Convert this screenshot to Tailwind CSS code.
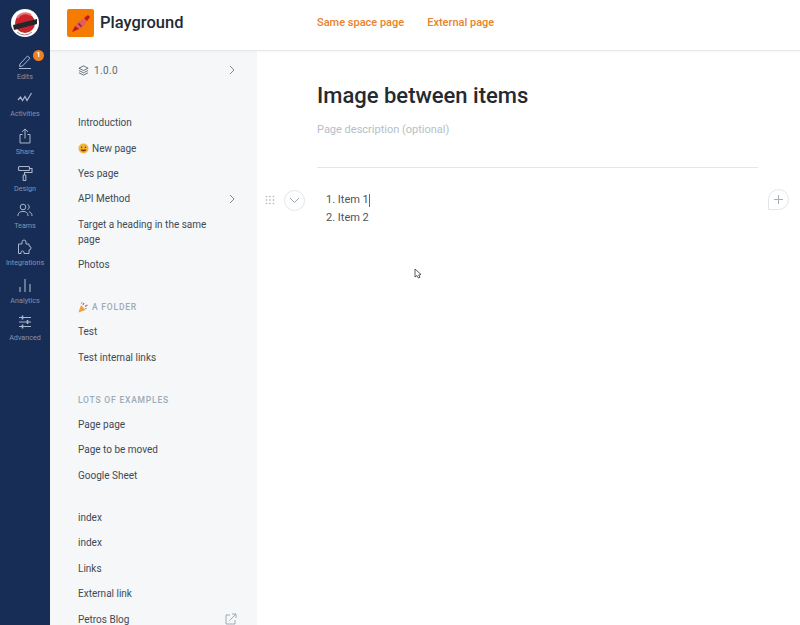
<!DOCTYPE html>
<html lang="en">
<head>
  <meta charset="UTF-8" />
  <title>Playground</title>
  <script src="https://cdn.jsdelivr.net/npm/@tailwindcss/browser@4"></script>
</head>
<body class="bg-white font-['Roboto',sans-serif] text-[#242a31] overflow-hidden">
  <div class="flex w-[800px] h-[625px] overflow-hidden">

    <!-- icon rail -->
    <aside class="w-[50px] shrink-0 bg-[#182d55] flex flex-col items-center text-[#8393b0] text-[7.200px] leading-[10px]">
      <div class="mt-[9px] mb-[1px] w-[28px] h-[28px] rounded-full bg-white flex items-center justify-center">
        <svg width="26" height="26" viewBox="0 0 26 26">
          <circle cx="13" cy="13" r="10" fill="#c9242c"/>
          <path d="M5 8a10 10 0 0 1 14-3" fill="none" stroke="#e8737a" stroke-width="2"/>
          <path d="M1 15 L25 9 L25 14 L2 20 Z" fill="#26262c"/>
          <path d="M5 22a11 11 0 0 0 15 0" fill="none" stroke="#8b8b8b" stroke-width="1"/>
        </svg>
      </div>
      <div class="mt-[9px] relative h-[37.300px] w-full flex flex-col items-center pt-[6px]">
        <div class="h-[16px] flex items-center"><svg width="16" height="16" viewBox="0 0 16 16" fill="none" stroke="#a9b6cc" stroke-width="1"><path d="M3 11 L10.500 3 L13 5.200 L5.500 13 L2.500 13.500 Z"/><path d="M2 15.500 H14"/></svg></div>
        <span class="mt-[3px]">Edits</span>
        <span class="absolute left-[33px] top-[3px] w-[11px] h-[11px] rounded-full bg-[#ed8022] text-white text-[7px] leading-[11px] text-center font-bold">1</span>
      </div>
      <div class="h-[37.300px] w-full flex flex-col items-center pt-[6px]">
        <div class="h-[16px] flex items-center"><svg width="16" height="14" viewBox="0 0 16 14" fill="none" stroke="#a9b6cc" stroke-width="1.200"><path d="M1 9 L3.500 6 L5.500 9.500 L8 5.500 L10 9.500 L14.500 2"/></svg></div>
        <span class="mt-[3px]">Activities</span>
      </div>
      <div class="h-[37.300px] w-full flex flex-col items-center pt-[6px]">
        <div class="h-[16px] flex items-center"><svg width="14" height="16" viewBox="0 0 14 16" fill="none" stroke="#a9b6cc" stroke-width="1"><path d="M7 10.500 V1 M4 3.800 L7 1 L10 3.800"/><path d="M4.500 6.500 H2 V15 H12 V6.500 H9.500"/></svg></div>
        <span class="mt-[3px]">Share</span>
      </div>
      <div class="h-[37.300px] w-full flex flex-col items-center pt-[6px]">
        <div class="h-[16px] flex items-center"><svg width="16" height="16" viewBox="0 0 16 16" fill="none" stroke="#a9b6cc" stroke-width="1.100"><rect x="1.500" y="1.500" width="11" height="4" rx="1"/><path d="M12.500 3.500 H15 V7.500 H7.500 V10"/><rect x="6.200" y="10" width="2.600" height="5.500" rx=".6"/></svg></div>
        <span class="mt-[3px]">Design</span>
      </div>
      <div class="h-[37.300px] w-full flex flex-col items-center pt-[6px]">
        <div class="h-[16px] flex items-center"><svg width="16" height="14" viewBox="0 0 16 14" fill="none" stroke="#a9b6cc" stroke-width="1"><circle cx="6" cy="4" r="2.800"/><path d="M1 13 C1 9.500 3 8.500 6 8.500 C9 8.500 11 9.500 11 13"/><path d="M10.500 1.400 A2.800 2.800 0 0 1 10.500 6.600 M12 8.800 C14 9.400 15 10.500 15 13"/></svg></div>
        <span class="mt-[3px]">Teams</span>
      </div>
      <div class="h-[37.300px] w-full flex flex-col items-center pt-[6px]">
        <div class="h-[16px] flex items-center"><svg width="16" height="16" viewBox="0 0 16 16" fill="none" stroke="#a9b6cc" stroke-width="1"><path d="M1.500 5 H5 V3 A2 2 0 0 1 9 3 V5 H12 V7 A2 2 0 0 1 12 11 V14.500 H7 V13 A1.600 1.600 0 0 0 4 13 V14.500 H1.500 Z"/></svg></div>
        <span class="mt-[3px]">Integrations</span>
      </div>
      <div class="h-[37.300px] w-full flex flex-col items-center pt-[6px]">
        <div class="h-[16px] flex items-center"><svg width="14" height="16" viewBox="0 0 14 16" fill="none" stroke="#a9b6cc" stroke-width="1.100"><path d="M2 15 V10 M7 15 V2 M12 15 V7"/></svg></div>
        <span class="mt-[3px]">Analytics</span>
      </div>
      <div class="h-[37.300px] w-full flex flex-col items-center pt-[6px]">
        <div class="h-[16px] flex items-center"><svg width="14" height="16" viewBox="0 0 14 16" fill="none" stroke="#a9b6cc" stroke-width="1"><path d="M1 3.500 H13 M1 8 H13 M1 12.500 H13"/><path d="M4.500 1.500 V5.500 M9.500 6 V10 M4.500 10.500 V14.500" stroke-width="1.600"/></svg></div>
        <span class="mt-[3px]">Advanced</span>
      </div>
    </aside>

    <div class="flex-1 flex flex-col min-w-0">
      <!-- top bar -->
      <header class="h-[51px] shrink-0 bg-white border-b border-[#e6e9ec] shadow-[0_1px_2px_rgba(0,0,0,0.04)] flex items-center relative z-10">
        <div class="w-[27px] h-[28px] ml-[17px] mb-[5px] rounded-[2px] bg-[#f57c00] flex items-center justify-center">
          <svg width="22" height="22" viewBox="0 0 22 22">
            <path d="M3 19 L7 11 L15 6 L17.500 8.500 L12 16 Z" fill="#e35d5d"/>
            <path d="M2 20 L5 14 L9 17 Z" fill="#c4161c"/>
            <path d="M14 6 L18 3 L20 5 L17 9 Z" fill="#c4161c"/>
            <path d="M8.500 11.500 L11.500 14.500" stroke="#7a2a2a" stroke-width="1.500"/>
          </svg>
        </div>
        <div class="w-[217px] ml-[6px] mb-[5px] text-[16.500px] font-medium text-[#242a31] leading-[24px]">Playground</div>
        <nav class="flex gap-[23px] mb-[3px] text-[11px] font-medium text-[#e8822b]">
          <span>Same space page</span>
          <span>External page</span>
        </nav>
      </header>

      <div class="flex-1 flex min-h-0">
        <!-- page list -->
        <nav class="w-[207px] shrink-0 bg-[#f5f7f9] text-[10px] font-normal text-[#3f4a55] overflow-hidden pl-[28px] pr-[20px]">
          <div class="h-[36px] flex items-center justify-between text-[#5c6975] pt-[2px] pr-[1px]">
            <div class="flex items-center gap-[5px] tracking-[0.4px]">
              <svg width="11" height="11" viewBox="0 0 12 12" fill="none" stroke="#5c6975" stroke-width="1"><path d="M6 1 L11 3.500 L6 6 L1 3.500 Z"/><path d="M1 6 L6 8.500 L11 6 M1 8.500 L6 11 L11 8.500"/></svg>
              <span>1.0.0</span>
            </div>
            <svg width="8" height="10" viewBox="0 0 8 10" fill="none" stroke="#7d8a96" stroke-width="1"><path d="M2 1 L6 5 L2 9"/></svg>
          </div>
          <ul class="mt-[23px] leading-[15px]">
            <li class="h-[25.400px] flex items-center">Introduction</li>
            <li class="h-[25.400px] flex items-center gap-[3px]">
              <svg width="11" height="11" viewBox="0 0 11 11"><circle cx="5.500" cy="5.500" r="5" fill="#f5b335"/><circle cx="3.600" cy="4.300" r=".7" fill="#5c3a10"/><circle cx="7.400" cy="4.300" r=".7" fill="#5c3a10"/><path d="M2.500 6.500 H8.500 C8 9 3 9 2.500 6.500 Z" fill="#7a3b12"/></svg>
              <span>New page</span>
            </li>
            <li class="h-[25.400px] flex items-center">Yes page</li>
            <li class="h-[25.400px] flex items-center justify-between pr-[1px]">
              <span>API Method</span>
              <svg width="8" height="10" viewBox="0 0 8 10" fill="none" stroke="#7d8a96" stroke-width="1"><path d="M2 1 L6 5 L2 9"/></svg>
            </li>
            <li class="pt-[5px] pb-[5px] pr-[16px]">Target a heading in the same page</li>
            <li class="h-[25.400px] flex items-center">Photos</li>
          </ul>
          <div class="mt-[22px] h-[17px] flex items-center gap-[4px] text-[8.500px] font-medium tracking-[0.800px] text-[#9daab6]">
            <svg width="10" height="11" viewBox="0 0 10 11"><path d="M0.500 10.500 L3 3 L7.500 8 Z" fill="#f0a040"/><path d="M5 3 L6 1 M7 4.500 L9.500 3 M3.500 1.500 L4 0.500" stroke="#d8574a" stroke-width="1.200"/><circle cx="8" cy="6.500" r=".8" fill="#6aa5d8"/></svg>
            <span>A FOLDER</span>
          </div>
          <ul class="mt-[3px]">
            <li class="h-[25.400px] flex items-center">Test</li>
            <li class="h-[25.400px] flex items-center">Test internal links</li>
          </ul>
          <div class="mt-[22px] h-[17px] flex items-center text-[8.500px] font-medium tracking-[0.800px] text-[#9daab6]">LOTS OF EXAMPLES</div>
          <ul class="mt-[3px]">
            <li class="h-[25.400px] flex items-center">Page page</li>
            <li class="h-[25.400px] flex items-center">Page to be moved</li>
            <li class="h-[25.400px] flex items-center">Google Sheet</li>
          </ul>
          <ul class="mt-[17px]">
            <li class="h-[25.400px] flex items-center">index</li>
            <li class="h-[25.400px] flex items-center">index</li>
            <li class="h-[25.400px] flex items-center">Links</li>
            <li class="h-[25.400px] flex items-center">External link</li>
            <li class="h-[25.400px] flex items-center justify-between">
              <span>Petros Blog</span>
              <svg width="12" height="12" viewBox="0 0 12 12" fill="none" stroke="#9daab6" stroke-width="1"><path d="M5 2 H1 V11 H10 V7"/><path d="M4.500 7.500 L11 1 M7 1 H11 V5"/></svg>
            </li>
          </ul>
        </nav>

        <!-- editor -->
        <main class="flex-1 min-w-0 bg-white pl-[60px] pr-[42px] pt-[29px] relative">
          <h1 class="text-[22px] leading-[32px] font-medium text-[#242a31]">Image between items</h1>
          <p class="mt-[10px] text-[11px] leading-[16px] text-[#b5bec7]">Page description (optional)</p>
          <div class="mt-[29px] border-t border-[#e3e6e9]"></div>

          <div class="mt-[22px] flex relative">
            <div class="absolute left-[-52px] top-[5px]">
              <svg width="10" height="10" viewBox="0 0 10 10" fill="#a5adb5"><circle cx="1.500" cy="1.500" r=".8"/><circle cx="5" cy="1.500" r=".8"/><circle cx="8.500" cy="1.500" r=".8"/><circle cx="1.500" cy="5" r=".8"/><circle cx="5" cy="5" r=".8"/><circle cx="8.500" cy="5" r=".8"/><circle cx="1.500" cy="8.500" r=".8"/><circle cx="5" cy="8.500" r=".8"/><circle cx="8.500" cy="8.500" r=".8"/></svg>
            </div>
            <div class="absolute left-[-33px] top-[0px] w-[21px] h-[21px] rounded-full border border-[#e3e6e9] flex items-center justify-center">
              <svg width="11" height="7" viewBox="0 0 11 7" fill="none" stroke="#9aa4ae" stroke-width="1"><path d="M1 1 L5.500 5.500 L10 1"/></svg>
            </div>
            <ol class="ml-[9px] pt-[1px] text-[11px] leading-[18px] text-[#4a5560]">
              <li class="flex items-center">1. Item 1<span class="inline-block w-[1px] h-[13px] bg-[#5c6975]"></span></li>
              <li>2. Item 2</li>
            </ol>
            <div class="absolute right-[-31px] top-[-1px] w-[21px] h-[21px] rounded-full rounded-bl-[3px] border border-[#e3e6e9] flex items-center justify-center">
              <svg width="11" height="11" viewBox="0 0 11 11" fill="none" stroke="#a5adb5" stroke-width="1"><path d="M5.500 1 V10 M1 5.500 H10"/></svg>
            </div>
          </div>

          <!-- mouse pointer -->
          <svg class="absolute left-[157px] top-[217px]" width="8" height="11" viewBox="0 0 8 11"><path d="M1 1 V9 L3 7.500 L4.500 10 L6 9.200 L4.700 7 L7 6.500 Z" fill="#fff" stroke="#333" stroke-width=".8"/></svg>
        </main>
      </div>
    </div>
  </div>
</body>
</html>
